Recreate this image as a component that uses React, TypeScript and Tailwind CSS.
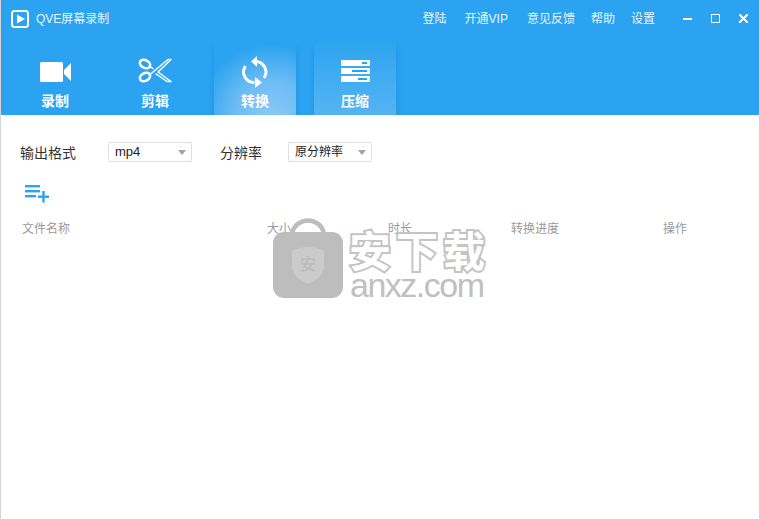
const font = { fontFamily: '"Liberation Sans", "Noto Sans CJK SC", sans-serif' };

function Logo() {
  return (
    <svg width="18" height="18" viewBox="0 0 18 18" className="ml-[11px]">
      <rect x="1" y="1" width="16" height="16" rx="2.5" fill="none" stroke="#fff" strokeWidth="2" />
      <path d="M6 4.5 L14 9 L6 13.5 Z" fill="#fff" />
    </svg>
  );
}

function Video() {
  return (
    <svg width="32" height="24" viewBox="0 0 32 24" className="mb-[1px]">
      <rect x="1" y="4" width="23" height="20" rx="1.5" fill="#fff" />
      <path d="M25 12 L32 5 V23 L25 16 Z" fill="#fff" />
    </svg>
  );
}

function Scissors() {
  return (
    <svg width="34" height="25" viewBox="0 0 34 25" fill="none" stroke="#fff">
      <ellipse cx="7" cy="6" rx="5.4" ry="3.8" transform="rotate(28 7 6)" strokeWidth="2.6" />
      <ellipse cx="7" cy="19" rx="5.4" ry="3.8" transform="rotate(-28 7 19)" strokeWidth="2.6" />
      <path d="M12 16.5 L30 1.5 L33 1.5 L20 14 L33 23.5 L29 23.5 L17.5 15.5 M12 8.5 L15.5 11" strokeWidth="1.5" strokeLinejoin="round" />
    </svg>
  );
}

function Convert() {
  return (
    <svg width="26" height="32" viewBox="0 0 26 32" fill="none" className="-mb-[5px]">
      <path d="M13 5.5 A10.5 10.5 0 0 1 22 22" stroke="#fff" strokeWidth="3" />
      <path d="M12.5 26.5 A10.5 10.5 0 0 1 3.5 10" stroke="#fff" strokeWidth="3" />
      <path d="M9 5.5 L15 0 V11 Z" fill="#fff" />
      <path d="M20 26.5 L13 21 V32 Z" fill="#fff" />
    </svg>
  );
}

function Compress() {
  return (
    <svg width="29" height="22" viewBox="0 0 29 22" className="mb-[1px]">
      <rect x="0" y="0" width="29" height="6" rx="1" fill="#fff" />
      <rect x="0" y="8" width="29" height="6" rx="1" fill="#fff" />
      <rect x="0" y="16" width="29" height="6" rx="1" fill="#fff" />
      <rect x="21" y="2" width="5" height="2" fill="#2ba3f0" />
      <rect x="11" y="10" width="15" height="2" fill="#2ba3f0" />
      <rect x="17" y="18" width="9" height="2" fill="#2ba3f0" />
    </svg>
  );
}

function Tab({ label, active, soft, icon }: { label: string; active?: boolean; soft?: boolean; icon: React.ReactNode }) {
  const bg = active
    ? "bg-[radial-gradient(ellipse_90%_90%_at_70%_100%,#88c9f6_0%,#6cbcf4_50%,#2ba3f0_100%)] shadow-[4px_8px_5px_-3px_rgba(20,120,200,0.3),-4px_8px_5px_-3px_rgba(20,120,200,0.3)]"
    : soft
      ? "bg-[linear-gradient(180deg,#2ba3f0_0%,#55b4f3_100%)] shadow-[4px_8px_5px_-3px_rgba(20,120,200,0.25),-4px_8px_5px_-3px_rgba(20,120,200,0.25)]"
      : "";
  return (
    <div className={`flex w-[82px] flex-col items-center ${bg}`}>
      <div className="flex h-[46px] w-full items-end justify-center">{icon}</div>
      <div className="mt-[8px] text-[14px] font-bold leading-[20px] text-white">{label}</div>
    </div>
  );
}

function Select({ value, width, small }: { value: string; width: string; small?: boolean }) {
  return (
    <div className={`flex h-[20px] items-center justify-between rounded-[2px] border border-[#dcdfe6] bg-white pl-[6px] pr-[4px] text-[#222] ${small ? "text-[12px]" : "text-[13px]"} ${width}`}>
      <span>{value}</span>
      <span className="mr-[1px] h-0 w-0 border-x-[4px] border-t-[5px] border-x-transparent border-t-[#a0a4aa]" />
    </div>
  );
}

export default function App() {
  return (
    <div className="relative flex h-[520px] w-[760px] flex-col overflow-hidden border-x border-b border-[#d4d4d4] bg-white" style={font}>
      <header className="-mx-px flex h-[115px] flex-col overflow-hidden bg-[#2ba3f0]">
        <div className="flex h-[37px] shrink-0 items-center">
          <Logo />
          <span className="ml-[7px] text-[12px] text-[#e9f5fe]">QVE屏幕录制</span>
          <nav className="ml-auto flex items-center text-[12px] text-[#e9f5fe]">
            <span>登陆</span>
            <span className="ml-[18px]">开通VIP</span>
            <span className="ml-[19px]">意见反馈</span>
            <span className="ml-[16px]">帮助</span>
            <span className="ml-[16px]">设置</span>
          </nav>
          <div className="ml-[28px] mr-[12px] flex items-center gap-[19px]">
            <span className="h-[2px] w-[9px] bg-white" />
            <span className="h-[9px] w-[9px] border-[1.5px] border-white" />
            <svg width="9" height="9" viewBox="0 0 9 9" stroke="#fff" strokeWidth="2"><path d="M0 0 L9 9 M9 0 L0 9" /></svg>
          </div>
        </div>
        <div className="flex flex-1 gap-[18px] pl-[14px]">
          <Tab label="录制" icon={<Video />} />
          <Tab label="剪辑" icon={<Scissors />} />
          <Tab label="转换" active icon={<Convert />} />
          <Tab label="压缩" soft icon={<Compress />} />
        </div>
      </header>

      <div className="mt-[26px] flex h-[22px] items-center pl-[19px] text-[14px] text-[#333]">
        <span className="w-[88px] pt-[2px]">输出格式</span>
        <Select value="mp4" width="w-[84px]" />
        <span className="ml-[28px] w-[68px] pt-[2px]">分辨率</span>
        <Select value="原分辨率" width="w-[84px]" small />
      </div>

      <div className="mt-[22px] pl-[23px]">
        <svg width="26" height="18" viewBox="0 0 26 18" className="block" fill="#2ba3f0">
          <rect x="1" y="0" width="15" height="2.4" />
          <rect x="1" y="5" width="15" height="2.4" />
          <rect x="1" y="10" width="11" height="2.4" />
          <rect x="14" y="10.5" width="11" height="2.4" />
          <rect x="18.3" y="6" width="2.4" height="11.5" />
        </svg>
      </div>

      <div className="mt-[17px] flex pl-[21px] text-[12px] leading-[18px] text-[#9a9a9a]">
        <span className="w-[245px]">文件名称</span>
        <span className="w-[121px]">大小</span>
        <span className="w-[123px]">时长</span>
        <span className="w-[152px]">转换进度</span>
        <span>操作</span>
      </div>

      {/* watermark overlay */}
      <div className="pointer-events-none absolute left-[271px] top-[218px] h-[84px] w-[218px]">
        <svg width="72" height="80" viewBox="0 0 72 80" className="absolute left-0 top-0">
          <path d="M20 16 C23 -2 49 -2 52 16" fill="none" stroke="#bdbdbd" strokeWidth="4.5" />
          <rect x="1" y="14" width="70" height="66" rx="11" fill="#bdbdbd" />
          <path d="M20 33 Q36 25 52 33 V51 Q49 61 36 66 Q23 61 20 51 Z" fill="#cbcbcb" />
        </svg>
        <span className="absolute left-[28px] top-[37px] text-[16px] font-bold leading-[20px] text-[#bdbdbd]">安</span>
        <div className="absolute left-[77px] top-[11px] whitespace-nowrap text-[42px] font-bold leading-[48px] tracking-[5px] text-white [-webkit-text-stroke:4px_#c4c4c4] [paint-order:stroke_fill]">安下载</div>
        <div className="absolute left-[78px] top-[49px] whitespace-nowrap text-[34px] leading-[36px] tracking-[-1.5px] text-[#c0c0c0]">anxz.com</div>
      </div>
    </div>
  );
}
